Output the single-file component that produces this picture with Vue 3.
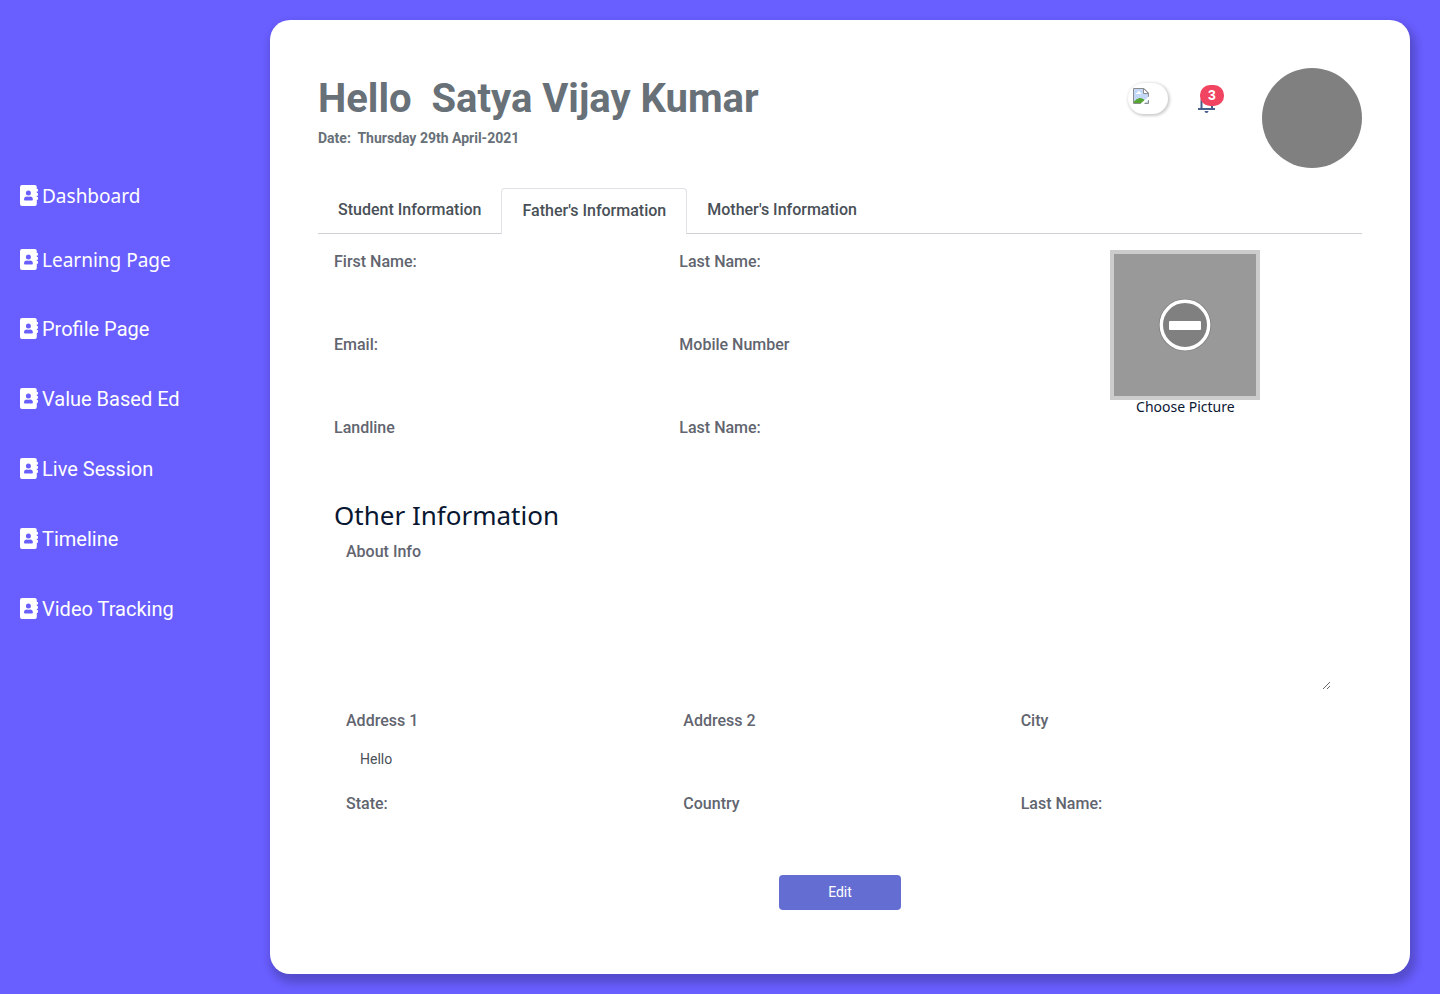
<script setup>
import { ref } from 'vue'

const links = ['Dashboard', 'Learning Page', 'Profile Page', 'Value Based Ed', 'Live Session', 'Timeline', 'Video Tracking']
const tabs = ['Student Information', "Father's Information", "Mother's Information"]
const active = ref(1)
const personal = ref([
  { id: 'first-name', label: 'First Name:', value: '' },
  { id: 'last-name', label: 'Last Name:', value: '' },
  { id: 'email', label: 'Email:', value: '' },
  { id: 'mobile', label: 'Mobile Number', value: '' },
  { id: 'landline', label: 'Landline', value: '' },
  { id: 'last-name-alt', label: 'Last Name:', value: '' },
])
const address = ref([
  { id: 'address-1', label: 'Address 1', value: 'Hello' },
  { id: 'address-2', label: 'Address 2', value: '' },
  { id: 'city', label: 'City', value: '' },
  { id: 'state', label: 'State:', value: '' },
  { id: 'country', label: 'Country', value: '' },
  { id: 'last-name-other', label: 'Last Name:', value: '' },
])
const about = ref('')
</script>

<template>
  <div class="page">
    <nav class="sidebar">
      <a v-for="(link, i) in links" :key="link" href="#" class="nav-link" :class="{ rounded: i < 2 }">
        <svg class="nav-icon" viewBox="0 0 18 21" aria-hidden="true">
          <path fill="#fff" fill-rule="evenodd" d="M2 0H14.800Q16.800 0 16.800 2V3.900H17.500Q18 3.900 18 4.400V6Q18 6.500 17.500 6.500H16.800V7.900H17.500Q18 7.900 18 8.400V10.200Q18 10.700 17.500 10.700H16.800V12H17.500Q18 12 18 12.500V14.200Q18 14.700 17.500 14.700H16.800V19Q16.800 21 14.800 21H2Q0 21 0 19V2Q0 0 2 0ZM8.400 5.500A2.500 2.500 0 1 0 8.400 10.500A2.500 2.500 0 1 0 8.400 5.500ZM4 14.600Q4 15.600 5 15.600H11.900Q12.900 15.600 12.900 14.600Q12.800 11.700 10 11.500Q8.400 12.100 6.800 11.500Q4.100 11.700 4 14.600Z" />
        </svg>
        <span>{{ link }}</span>
      </a>
    </nav>

    <main class="card">
      <header class="header">
        <div class="greeting">
          <h1>Hello&nbsp; Satya Vijay Kumar</h1>
          <p>Date:&nbsp; Thursday 29th April-2021</p>
        </div>
        <div class="tools">
          <button class="pill" type="button" aria-label="Picture">
            <svg width="16" height="16" viewBox="0 0 16 16" aria-hidden="true">
              <path fill="#c3d7f7" d="M.5.500H11L15.500 5V15.500H.500Z" />
              <path fill="#fff" d="M3 6Q3 4.700 4.300 4.700Q4.700 3 6 3.300Q7.300 3.500 7.300 4.800Q8.600 4.800 8.500 6Z" />
              <path fill="#55a532" d="M1 15V13.500Q3.500 10.500 6.500 10Q9 9.700 11 11.500L13 15Z" />
              <path fill="none" stroke="#8c8c8c" d="M15.500 10V5L11 .500H.500V15.500H15.500V12" />
              <path fill="#fff" stroke="#8c8c8c" d="M10.500 .500V5.500H15.500Z" />
              <path stroke="#fff" stroke-width="2.400" d="M8.500 16.500L16.500 9.500" />
            </svg>
          </button>
          <button class="bell" type="button" aria-label="Notifications">
            <svg width="18" height="20" viewBox="0 0 18 20" aria-hidden="true">
              <path fill="none" stroke="#475f8b" stroke-width="2" d="M0 16H17M3.500 16V8Q3.500 3 8.500 3Q14 3 14 8V16" />
              <path fill="#475f8b" d="M6.500 18H10.500Q10.500 20 8.500 20Q6.500 20 6.500 18Z" />
            </svg>
            <span class="badge">3</span>
          </button>
          <div class="avatar"></div>
        </div>
      </header>

      <div class="tabs" role="tablist">
        <button v-for="(tab, i) in tabs" :key="tab" type="button" role="tab" class="tab" :class="{ active: active === i }" :aria-selected="active === i" @click="active = i">{{ tab }}</button>
      </div>

      <form class="form" @submit.prevent>
        <div class="top">
          <div class="personal">
            <div v-for="field in personal" :key="field.id" class="field">
              <label :for="field.id">{{ field.label }}</label>
              <input :id="field.id" v-model="field.value" type="text" />
            </div>
          </div>
          <div class="picture">
            <div class="photo">
              <svg width="54" height="54" viewBox="0 0 54 54" aria-hidden="true">
                <circle cx="27" cy="27" r="26.300" fill="#808080" />
                <circle cx="27" cy="27" r="23.700" fill="none" stroke="#fff" stroke-width="3.400" />
                <rect x="11" y="23" width="32" height="9" rx="1" fill="#fff" />
              </svg>
            </div>
            <button type="button" class="choose">Choose Picture</button>
          </div>
        </div>

        <h2>Other Information</h2>
        <div class="other">
          <div class="about">
            <label for="about">About Info</label>
            <textarea id="about" v-model="about"></textarea>
          </div>
          <div class="addresses">
            <div v-for="field in address" :key="field.id" class="field">
              <label :for="field.id">{{ field.label }}</label>
              <input :id="field.id" v-model="field.value" type="text" />
            </div>
          </div>
        </div>
        <button type="submit" class="edit">Edit</button>
      </form>
    </main>
  </div>
</template>

<style>
body {
  background: #695eff;
}
</style>

<style scoped>
* {
  box-sizing: border-box;
}
.page {
  display: flex;
  min-height: 100vh;
  padding: 20px 30px 20px 0;
  background: #695eff;
  font-family: Roboto, sans-serif;
}
.sidebar {
  flex: 0 0 270px;
  display: flex;
  flex-direction: column;
  gap: 40px;
  padding: 162px 20px 0;
}
.nav-link {
  display: flex;
  align-items: center;
  gap: 4px;
  height: 30px;
  color: #fff;
  font-size: 20px;
  line-height: 30px;
  text-decoration: none;
}
.nav-link span {
  padding-top: 2px;
}
.nav-link.rounded {
  height: 27px;
  font-family: "Noto Sans", sans-serif;
  font-size: 19px;
}
.nav-link.rounded span {
  padding-top: 0;
}
.nav-link.rounded:first-child {
  margin-bottom: -3px;
}
.nav-icon {
  width: 18px;
  height: 21px;
}
.card {
  flex: 1;
  min-width: 0;
  padding: 48px;
  border-radius: 20px;
  background: #fff;
  box-shadow: 3px 6px 8px 3px rgba(0, 0, 0, 0.2);
}
.header {
  display: flex;
  justify-content: space-between;
}
h1 {
  margin: 6px 0 0;
  color: #687078;
  font-size: 40px;
  line-height: 50px;
  font-weight: 700;
}
.greeting p {
  margin: 4px 0 0;
  color: #687078;
  font-size: 14px;
  line-height: 21px;
  font-weight: 700;
}
.tools {
  display: flex;
}
.pill {
  display: flex;
  align-items: flex-start;
  width: 40px;
  height: 31px;
  margin: 15px 30px 0 0;
  padding: 5px;
  border: 0;
  border-radius: 16px;
  background: #fff;
  box-shadow: 1px 1px 3px 1px rgba(0, 0, 0, 0.2);
}
.bell {
  position: relative;
  width: 18px;
  height: 20px;
  margin: 25px 46px 0 0;
  padding: 0;
  border: 0;
  background: none;
}
.bell svg {
  display: block;
}
.badge {
  position: absolute;
  top: -8px;
  left: 2px;
  width: 24px;
  height: 21px;
  border-radius: 10px;
  background: #f04461;
  color: #fff;
  font: 700 14px/21px "Liberation Sans", sans-serif;
  text-align: center;
}
.avatar {
  width: 100px;
  height: 100px;
  border-radius: 50%;
  background: #808080;
}
.tabs {
  display: flex;
  margin-top: 20px;
  border-bottom: 1px solid #cfcfd4;
}
.tab {
  height: 45px;
  padding: 0 20px 2px;
  border: 0;
  background: none;
  color: #495057;
  font: 500 16px/24px Roboto, sans-serif;
}
.tab.active {
  height: 46px;
  margin-bottom: -1px;
  border: 1px solid #dee2e6;
  border-bottom: 0;
  border-radius: 4px 4px 0 0;
  background: #fff;
}
.form {
  padding: 16px 16px 0;
}
.top {
  display: grid;
  grid-template-columns: 2fr 1fr;
}
.personal {
  display: grid;
  grid-template-columns: 1fr 1fr;
  column-gap: 16px;
}
.field {
  display: flex;
  flex-direction: column;
  height: 83px;
}
label {
  color: #62656f;
  font-size: 16px;
  line-height: 24px;
  font-weight: 500;
}
input {
  width: 100%;
  height: 35px;
  margin-top: 8px;
  padding: 0 14px;
  border: 0;
  background: transparent;
  color: #495057;
  font: 400 14px/21px Roboto, sans-serif;
}
.picture {
  display: flex;
  flex-direction: column;
  align-items: center;
  padding-left: 16px;
}
.photo {
  display: grid;
  place-items: center;
  width: 150px;
  height: 150px;
  border: 4px solid #ccc;
  background: #999;
}
.choose {
  padding: 0;
  border: 0;
  background: none;
  color: #0c1733;
  font: 400 14px/14px "Noto Sans", sans-serif;
}
h2 {
  margin: 0;
  color: #081631;
  font: 400 26px/32px "Noto Sans", sans-serif;
}
.other {
  padding: 9px 12px 0;
}
.about {
  display: flex;
  flex-direction: column;
}
textarea {
  width: 100%;
  height: 129px;
  padding: 10px 14px;
  border: 3px solid transparent;
  background: transparent;
  color: #495057;
  font: 400 14px/21px Roboto, sans-serif;
  resize: vertical;
}
.addresses {
  display: grid;
  grid-template-columns: repeat(3, 1fr);
  column-gap: 24px;
  margin-top: 16px;
}
.edit {
  display: block;
  width: 122px;
  height: 35px;
  margin: 0 auto;
  border: 0;
  border-radius: 4px;
  background: #646dd2;
  color: #fff;
  font: 400 14px/21px Roboto, sans-serif;
}
</style>
